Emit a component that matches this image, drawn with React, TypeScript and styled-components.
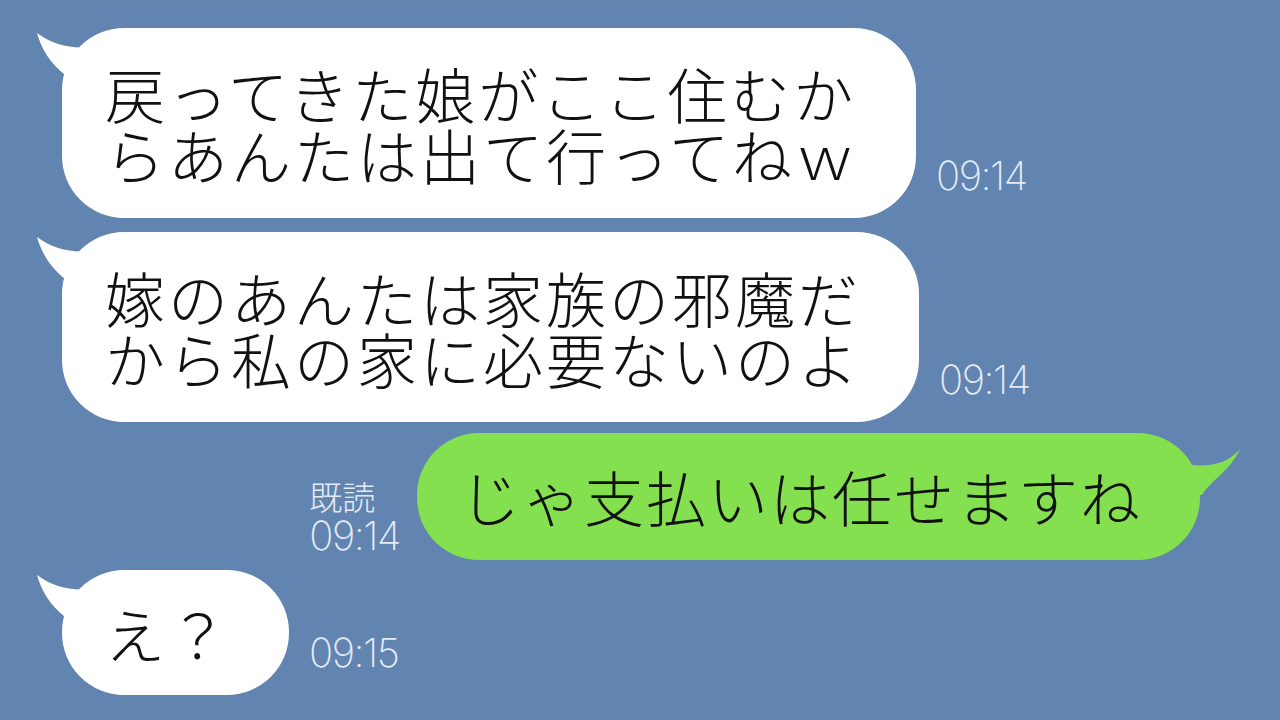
import React from "react";
import styled, { createGlobalStyle } from "styled-components";

const GlobalStyle = createGlobalStyle`
  html, body {
    margin: 0;
    padding: 0;
    background: #6185b0;
  }
  body {
    font-family: "Noto Sans CJK JP", "Noto Sans", sans-serif;
  }
`;

const Screen = styled.div`
  width: 1280px;
  height: 720px;
  overflow: hidden;
  background: #6185b0;
  display: flex;
  flex-direction: column;
  padding-top: 28px;
  box-sizing: border-box;
`;

const Row = styled.div<{ $mine?: boolean; $gap: number }>`
  display: flex;
  align-items: flex-end;
  flex-direction: ${(p) => (p.$mine ? "row-reverse" : "row")};
  padding: ${(p) => (p.$mine ? "0 80px 0 0" : "0 0 0 62px")};
  margin-bottom: ${(p) => p.$gap}px;
`;

const Bubble = styled.div<{ $mine?: boolean; $single?: boolean }>`
  position: relative;
  background: ${(p) => (p.$mine ? "#84e04f" : "#ffffff")};
  border-radius: 62px;
  padding: ${(p) =>
    p.$mine
      ? "32px 58px 34px 43px"
      : p.$single
      ? "32px 58px 32px 43px"
      : "34px 58px 34px 43px"};
  font-size: 60px;
  letter-spacing: ${(p) => (p.$mine ? 2 : 3)}px;
  line-height: 61px;
  font-weight: 300;
  color: #111;
  white-space: pre;
`;

const Tail = styled.svg<{ $mine?: boolean }>`
  position: absolute;
  top: 0;
  width: 80px;
  height: 70px;
  ${(p) => (p.$mine ? "right: -42px;" : "left: -27px;")}
`;

const Meta = styled.div<{ $mine?: boolean }>`
  display: flex;
  flex-direction: column;
  gap: 4px;
  margin: ${(p) => (p.$mine ? "0 17px 6px 0" : "0 0 24px 20px")};
  color: #e4ebf6;
`;

const Time = styled.span`
  font-family: Inter, "Noto Sans", sans-serif;
  font-size: 40px;
  font-weight: 200;
  line-height: 36px;
  letter-spacing: -1.5px;
`;

const ReadMark = styled.span`
  font-size: 33px;
  font-weight: 300;
  line-height: 36px;
`;

type Msg = {
  text: string;
  time: string;
  mine?: boolean;
  read?: boolean;
  gap: number;
};

const messages: Msg[] = [
  { text: "戻ってきた娘がここ住むか\nらあんたは出て行ってねｗ", time: "09:14", gap: 14 },
  { text: "嫁のあんたは家族の邪魔だ\nから私の家に必要ないのよ", time: "09:14", gap: 11 },
  { text: "じゃ支払いは任せますね", time: "09:14", mine: true, read: true, gap: 10 },
  { text: "え？", time: "09:15", gap: 0 },
];

const BubbleTail: React.FC<{ mine?: boolean }> = ({ mine }) => (
  <Tail $mine={mine} viewBox="0 0 80 70">
    {mine ? (
      <path d="M78,16 C66,30 50,34 30,32 L20,62 L40,62 C50,46 68,38 78,16 Z" fill="#84e04f" />
    ) : (
      <path d="M2,5 C20,18 40,22 62,18 L62,60 L30,47 C15,35 6,20 2,5 Z" fill="#ffffff" />
    )}
  </Tail>
);

export default function App() {
  return (
    <Screen>
      <GlobalStyle />
      {messages.map((m, i) => (
        <Row key={i} $mine={m.mine} $gap={m.gap}>
          <Bubble $mine={m.mine} $single={!m.text.includes("\n")}>
            <BubbleTail mine={m.mine} />
            {m.text}
          </Bubble>
          <Meta $mine={m.mine}>
            {m.read && <ReadMark>既読</ReadMark>}
            <Time>{m.time}</Time>
          </Meta>
        </Row>
      ))}
    </Screen>
  );
}
